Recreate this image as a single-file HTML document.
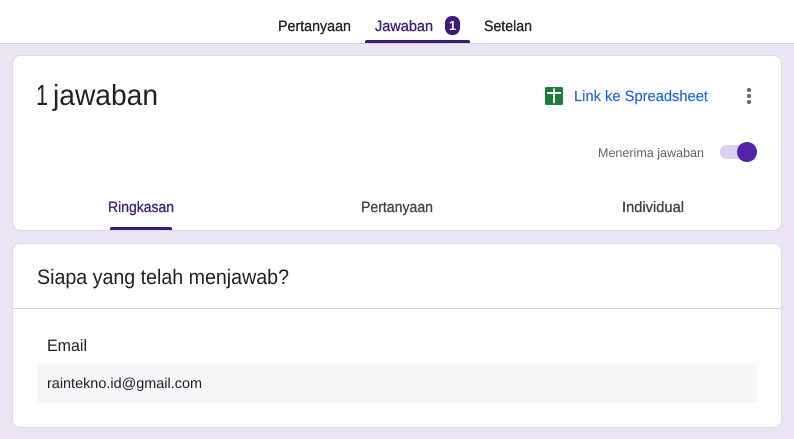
<!DOCTYPE html>
<html><head><meta charset="utf-8"><style>
html,body{margin:0;padding:0;width:794px;height:439px;overflow:hidden;background:#ebe4f5}
svg{display:block}
text{font-family:"Liberation Sans",sans-serif;text-rendering:geometricPrecision}
.m{stroke-width:.3px;paint-order:stroke}
</style></head><body>
<svg width="794" height="439" viewBox="0 0 794 439" xmlns="http://www.w3.org/2000/svg">
<rect width="794" height="439" fill="#ebe4f5"/>
<rect width="794" height="43" fill="#fff"/>
<rect y="43" width="794" height="1" fill="#d5d0dc"/>
<text x="278" y="31" font-size="15" fill="#202124" stroke="#202124" class="m" textLength="73" lengthAdjust="spacingAndGlyphs">Pertanyaan</text>
<text x="375" y="31" font-size="15" fill="#3c1a78" stroke="#3c1a78" class="m" textLength="58" lengthAdjust="spacingAndGlyphs">Jawaban</text>
<rect x="445" y="16" width="15" height="19" rx="7" fill="#3c1a78"/>
<text x="449" y="30" font-size="13" font-weight="bold" fill="#fff" textLength="7" lengthAdjust="spacingAndGlyphs">1</text>
<text x="484" y="31" font-size="15" fill="#202124" stroke="#202124" class="m" textLength="48" lengthAdjust="spacingAndGlyphs">Setelan</text>
<path d="M365 43v-1a2 2 0 0 1 2-2h101a2 2 0 0 1 2 2v1z" fill="#3c1a78"/>

<rect x="12.5" y="55.5" width="769" height="175" rx="8" fill="#fff" stroke="#dadce0"/>
<text x="36" y="105" font-size="29" fill="#202124" textLength="12" lengthAdjust="spacingAndGlyphs">1</text>
<text x="53" y="105" font-size="29" fill="#202124" textLength="105" lengthAdjust="spacingAndGlyphs">jawaban</text>
<rect x="545" y="87" width="18" height="18" rx="1.5" fill="#188038"/>
<path d="M553 88.500h2v3.500h6v2h-6v9h-2v-9h-6v-2h6z" fill="#fff"/>
<text x="574" y="101" font-size="15" fill="#1a66e0" stroke="#1a66e0" stroke-width=".15" textLength="134" lengthAdjust="spacingAndGlyphs">Link ke Spreadsheet</text>
<circle cx="749" cy="90" r="2" fill="#5f6368"/><circle cx="749" cy="96" r="2" fill="#5f6368"/><circle cx="749" cy="102" r="2" fill="#5f6368"/>
<text x="598" y="157" font-size="12.500" fill="#5f6368" textLength="106" lengthAdjust="spacingAndGlyphs">Menerima jawaban</text>
<rect x="720" y="145" width="30" height="14" rx="7" fill="#dcd2ee"/>
<circle cx="747" cy="152" r="10" fill="#5423a8"/>
<text x="108" y="212" font-size="15" fill="#3c1a78" stroke="#3c1a78" class="m" textLength="66" lengthAdjust="spacingAndGlyphs">Ringkasan</text>
<text x="361" y="212" font-size="15" fill="#3c4043" stroke="#3c4043" class="m" textLength="72" lengthAdjust="spacingAndGlyphs">Pertanyaan</text>
<text x="622" y="212" font-size="15" fill="#3c4043" stroke="#3c4043" class="m" textLength="62" lengthAdjust="spacingAndGlyphs">Individual</text>
<path d="M110 230v-1a2 2 0 0 1 2-2h58a2 2 0 0 1 2 2v1z" fill="#3c1a78"/>

<rect x="12.5" y="243.5" width="769" height="184" rx="8" fill="#fff" stroke="#dadce0"/>
<text x="37" y="284" font-size="21" fill="#202124" textLength="252" lengthAdjust="spacingAndGlyphs">Siapa yang telah menjawab?</text>
<rect x="13" y="308" width="768" height="1" fill="#d5d6da"/>
<text x="47" y="351" font-size="16.500" fill="#202124" textLength="40" lengthAdjust="spacingAndGlyphs">Email</text>
<rect x="37" y="363" width="720" height="40" rx="4" fill="#f5f6f8"/>
<text x="47" y="388" font-size="14.500" fill="#202124" textLength="155" lengthAdjust="spacingAndGlyphs">raintekno.id@gmail.com</text>
</svg>
</body></html>
